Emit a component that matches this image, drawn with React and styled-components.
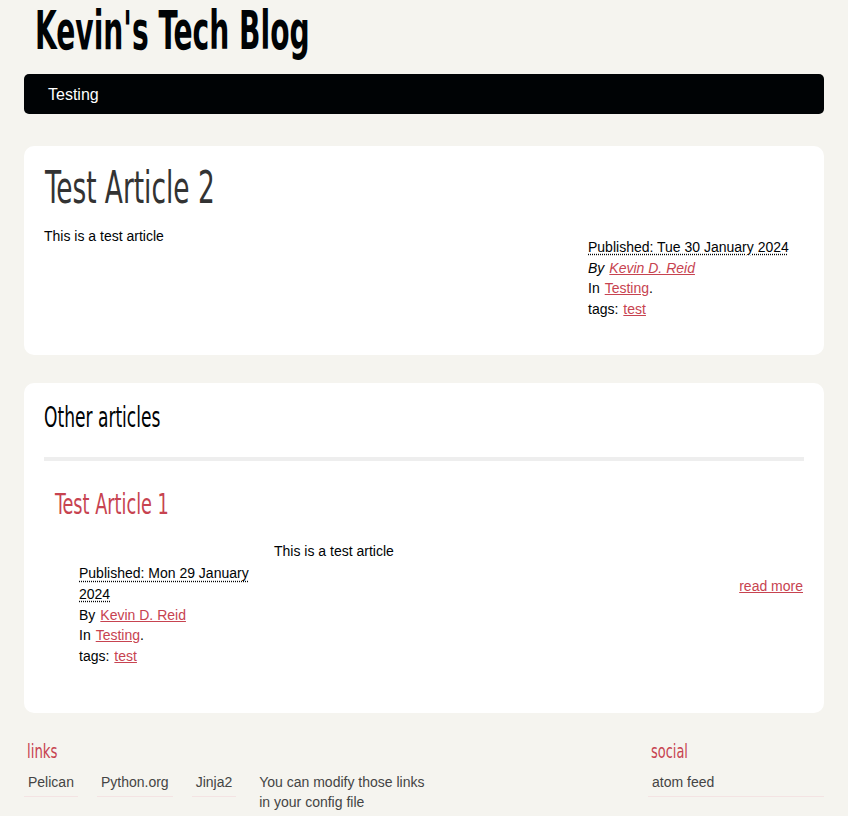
import React from 'react'
import styled, { createGlobalStyle } from 'styled-components'

const GlobalStyle = createGlobalStyle`
  body {
    margin: 0;
    background: #f5f4ef;
    color: #000305;
    font: 14px/1.5 "Liberation Sans", Arial, sans-serif;
  }
`

const headingFont = `"DejaVu Sans Condensed", "Liberation Sans Narrow", sans-serif`

const Squeeze = styled.span`
  display: inline-block;
  transform: scaleX(${p => p.$x});
  transform-origin: left center;
  white-space: nowrap;
`

const Page = styled.div`
  width: 800px;
  margin: 0 auto;
`

const SiteTitle = styled.h1`
  margin: 0;
  padding: 0 0 0 11px;
  height: 74px;
  font-family: ${headingFont};
  font-size: 54px;
  font-weight: bold;
  line-height: 62px;
`

const Nav = styled.nav`
  background: #000305;
  border-radius: 5px;
  height: 40px;
  display: flex;
  align-items: center;
  padding: 0 24px;
`

const NavLink = styled.a`
  color: #fff;
  font-size: 16px;
  line-height: 20px;
  margin-top: 1px;
  text-decoration: none;
`

const Card = styled.section`
  background: #fff;
  border-radius: 10px;
  padding: 20px 20px ${p => p.$bottom || '20px'};
  margin-top: ${p => p.$top || '32px'};
`

const ArticleTitle = styled.h1`
  margin: 0;
  padding-left: 1px;
  font-family: ${headingFont};
  font-weight: normal;
  font-size: 45px;
  line-height: 43px;
  color: #333;
`

const ArticleRow = styled.div`
  display: flex;
  justify-content: space-between;
  align-items: flex-start;
  margin-top: 17px;
`

const Text = styled.p`
  margin: 0;
  line-height: 21px;
`

const Meta = styled.footer`
  width: 216px;
  padding: 11px 0 16px;
`

const MetaLine = styled.div`
  line-height: 20.6px;
  font-style: ${p => (p.$italic ? 'italic' : 'normal')};
`

const Abbr = styled.abbr`
  text-decoration: underline dotted;
  text-underline-offset: 2px;
`

const Red = styled.a`
  color: #c74350;
  margin-left: 5px;
  text-decoration: underline;
  cursor: pointer;
`

const Section = styled.h2`
  margin: 0;
  padding-top: 1px;
  font-family: ${headingFont};
  font-weight: normal;
  font-size: 28px;
  line-height: 28px;
`

const Divider = styled.hr`
  border: 0;
  height: 4px;
  background: #eee;
  margin: 25px 0 0;
`

const PostLink = styled.a`
  display: block;
  margin: 27px 0 0 11px;
  font-family: ${headingFont};
  font-size: 28px;
  line-height: 34px;
  color: #c74350;
  text-decoration: underline;
  text-decoration-thickness: 2px;
  text-underline-offset: 4px;
`

const PostRow = styled.div`
  display: flex;
  align-items: flex-start;
  margin-top: 19px;
  padding-left: 35px;
`

const PostMeta = styled.div`
  width: 180px;
  margin-top: 22px;
  margin-right: 15px;
`

const PostBody = styled.div`
  flex: 1;
  display: flex;
  flex-direction: column;
`

const ReadMore = styled.a`
  align-self: flex-end;
  color: #c74350;
  text-decoration: underline;
  line-height: 21px;
  margin-top: 14px;
  margin-right: 1px;
`

const Footer = styled.div`
  display: flex;
  justify-content: space-between;
  margin-top: 26px;
`

const Block = styled.div`
  width: ${p => p.$w};
`

const BlockTitle = styled.h2`
  margin: 0 0 9px 3px;
  font-family: ${headingFont};
  font-size: 20px;
  line-height: 24px;
  font-weight: normal;
  color: #c74350;
`

const LinkList = styled.ul`
  list-style: none;
  margin: 0;
  padding: 0;
  display: flex;
  gap: 19px;
  align-items: flex-start;
`

const LinkItem = styled.li`
  padding: 0 4px 4px;
  border-bottom: ${p => (p.$plain ? '0' : '1px solid #f4e3e3')};
  color: #444;
  line-height: 20px;
  width: ${p => p.$w || 'auto'};
  flex: ${p => (p.$grow ? '1' : '0 0 auto')};
`

export default function App() {
  return (
    <Page>
      <GlobalStyle />
      <SiteTitle>
        <Squeeze $x={0.579}>Kevin's Tech Blog</Squeeze>
      </SiteTitle>
      <Nav>
        <NavLink>Testing</NavLink>
      </Nav>

      <Card>
        <ArticleTitle>
          <Squeeze $x={0.652}>Test Article 2</Squeeze>
        </ArticleTitle>
        <ArticleRow>
          <Text>This is a test article</Text>
          <Meta>
            <MetaLine><Abbr>Published: Tue 30 January 2024</Abbr></MetaLine>
            <MetaLine $italic>By<Red>Kevin D. Reid</Red></MetaLine>
            <MetaLine>In<Red>Testing</Red>.</MetaLine>
            <MetaLine>tags:<Red>test</Red></MetaLine>
          </Meta>
        </ArticleRow>
      </Card>

      <Card $top="28px" $bottom="47px">
        <Section>
          <Squeeze $x={0.678}>Other articles</Squeeze>
        </Section>
        <Divider />
        <PostLink>
          <Squeeze $x={0.703}>Test Article 1</Squeeze>
        </PostLink>
        <PostRow>
          <PostMeta>
            <MetaLine><Abbr>Published: Mon 29 January 2024</Abbr></MetaLine>
            <MetaLine>By<Red>Kevin D. Reid</Red></MetaLine>
            <MetaLine>In<Red>Testing</Red>.</MetaLine>
            <MetaLine>tags:<Red>test</Red></MetaLine>
          </PostMeta>
          <PostBody>
            <Text>This is a test article</Text>
            <ReadMore>read more</ReadMore>
          </PostBody>
        </PostRow>
      </Card>

      <Footer>
        <Block $w="420px">
          <BlockTitle>
            <Squeeze $x={0.74}>links</Squeeze>
          </BlockTitle>
          <LinkList>
            <LinkItem>Pelican</LinkItem>
            <LinkItem>Python.org</LinkItem>
            <LinkItem>Jinja2</LinkItem>
            <LinkItem $plain $w="170px">You can modify those links in your config file</LinkItem>
          </LinkList>
        </Block>
        <Block $w="176px">
          <BlockTitle>
            <Squeeze $x={0.72}>social</Squeeze>
          </BlockTitle>
          <LinkList>
            <LinkItem $grow>atom feed</LinkItem>
          </LinkList>
        </Block>
      </Footer>
    </Page>
  )
}
